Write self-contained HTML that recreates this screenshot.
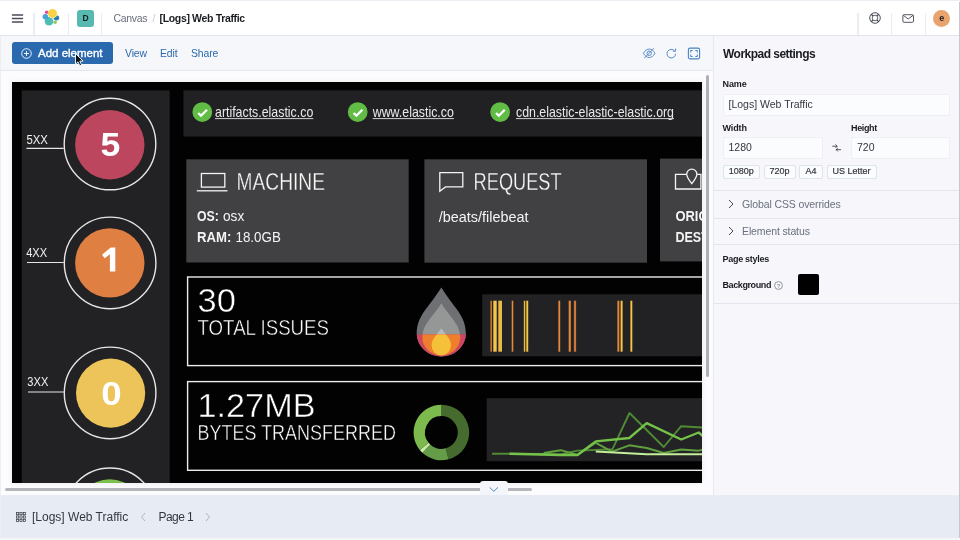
<!DOCTYPE html>
<html><head><meta charset="utf-8">
<style>
*{box-sizing:border-box;margin:0;padding:0}
html,body{width:960px;height:540px;overflow:hidden}
body{font-family:"Liberation Sans",sans-serif;background:#f6f7fb;position:relative;color:#343741}
.abs{position:absolute}
#hdr{left:0;top:0;width:960px;height:36px;background:#fff;border-top:1.5px solid #eceef3;border-bottom:1px solid #e1e4eb;box-shadow:0 1px 2px rgba(60,70,100,0.06)}
.sep{position:absolute;top:12.5px;width:1.3px;height:22.5px;background:#eaecf2}
#tool{left:0;top:36px;width:714px;height:35px;background:#f6f7fb;border-bottom:1px solid #e4e7ee}
#addbtn{left:12px;top:42.3px;width:101px;height:22px;background:#2a69ae;border-radius:3px;color:#fff;font-size:11.5px;line-height:22px}
.tl{position:absolute;top:47.6px;font-size:10.4px;letter-spacing:-0.1px;color:#2a69ae;line-height:12px}
#stage{left:0;top:71px;width:713px;height:424px;background:#fcfcfe}
#canvas{left:11.9px;top:82px;width:690.1px;height:401.4px;background:#020203;overflow:hidden;box-shadow:0 0 5px rgba(40,50,80,0.10)}
#side{left:713px;top:36px;width:247px;height:459px;background:#f6f6fb;border-left:1px solid #e6e8ef}
#foot{left:0;top:495px;width:960px;height:43px;background:#e7ebf4}
.lbl{position:absolute;font-size:9px;letter-spacing:-0.1px;font-weight:bold;color:#1a1c21;line-height:10px}
.inp{position:absolute;height:22px;background:#fbfcfd;border:1px solid #eef0f5;border-radius:2px;font-size:10.5px;line-height:19px;padding-left:5px;color:#343741}
.sbtn{position:absolute;top:165px;height:13.5px;background:#fbfcfd;border:1px solid #dfe3ea;border-radius:2px;font-size:9px;line-height:11.5px;text-align:center;color:#343741;-webkit-text-stroke:0.2px #343741}
.hr{position:absolute;left:714px;width:246px;height:1px;background:#e3e6ee}
.acc{position:absolute;left:742px;font-size:10.5px;letter-spacing:-0.12px;color:#69707d;line-height:12px}
.ct{position:absolute;color:#fff;white-space:nowrap}
#wrap{position:absolute;left:0;top:0;width:960px;height:540px;will-change:transform;opacity:0.999}
</style></head><body><div id="wrap">
<!-- header -->
<div id="hdr" class="abs"></div>
<div class="sep" style="left:33.4px"></div><div class="sep" style="left:68px"></div><div class="sep" style="left:101px"></div>
<div class="sep" style="left:857.4px"></div><div class="sep" style="left:891.2px"></div><div class="sep" style="left:925px"></div>
<svg class="abs" style="left:11px;top:13px" width="13" height="11"><g stroke="#4a4e59" stroke-width="1.6"><path d="M0.9 2h11.2M0.9 5.5h11.2M0.9 9h11.2"/></g></svg>
<!-- elastic logo -->
<svg class="abs" style="left:42px;top:8px" width="18" height="18" viewBox="42 8 18 18">
<circle cx="49" cy="21.2" r="4.3" fill="#4fbdb4"/>
<ellipse cx="45.4" cy="16.8" rx="2.9" ry="2.7" fill="#4aa2da"/>
<ellipse cx="56.4" cy="17.8" rx="2.8" ry="2.6" fill="#2a7db1"/>
<circle cx="52.5" cy="13.4" r="4.9" fill="#fefefc"/>
<circle cx="52.5" cy="13.4" r="4.5" fill="#fad344"/>
<circle cx="46.6" cy="12.3" r="1.7" fill="#e3489a"/>
<circle cx="55.2" cy="22.3" r="1.7" fill="#93c75a"/>
</svg>
<div class="abs" style="left:77px;top:10px;width:17px;height:17px;border-radius:3px;background:#56bab0;color:#1a1c21;font-size:8.5px;font-weight:bold;text-align:center;line-height:17px">D</div>
<div class="abs" style="left:113.6px;top:12px;font-size:10.5px;line-height:12px;color:#69707d;letter-spacing:-0.35px">Canvas</div>
<div class="abs" style="left:152.6px;top:12px;font-size:10.5px;line-height:12px;color:#c5cad3">/</div>
<div class="abs" style="left:159.5px;top:12px;font-size:10.5px;line-height:12px;color:#1a1c21;font-weight:bold;letter-spacing:-0.34px">[Logs] Web Traffic</div>
<!-- header right icons -->
<svg class="abs" style="left:867.7px;top:11.4px" width="14" height="14" viewBox="0 0 14 14"><g fill="none" stroke="#3a3e48"><circle cx="7" cy="7" r="5.3" stroke-width="0.9"/><circle cx="7" cy="7" r="2.8" stroke-width="0.8"/><path d="M3.3 3.3l1.6 1.6M10.7 3.3L9.1 4.9M3.3 10.7l1.6-1.6M10.7 10.7L9.1 9.1" stroke-width="1.3"/></g></svg>
<svg class="abs" style="left:902px;top:14px" width="13" height="10" viewBox="0 0 13 10"><rect x="0.9" y="0.7" width="10.6" height="7.6" rx="1.2" fill="none" stroke="#4a4e58" stroke-width="0.95"/><path d="M1.4 1.4l4.8 3.6L11 1.4" fill="none" stroke="#4a4e58" stroke-width="0.95"/></svg>
<div class="abs" style="left:933.1px;top:9.7px;width:17.2px;height:17.2px;border-radius:50%;background:#e9a36d;color:#1a1c21;font-size:9px;font-weight:bold;text-align:center;line-height:16.5px">e</div>


<!-- toolbar -->
<div id="tool" class="abs"></div>
<div id="addbtn" class="abs"><svg class="abs" style="left:9px;top:5.5px" width="11" height="11" viewBox="0 0 11 11"><circle cx="5.5" cy="5.5" r="4.8" fill="none" stroke="#fff" stroke-width="0.9"/><path d="M5.5 3v5M3 5.5h5" stroke="#fff" stroke-width="0.9"/></svg><span class="abs" style="left:26px;top:0;font-size:11.5px;-webkit-text-stroke:0.35px #fff;white-space:nowrap">Add element</span></div>
<div class="tl" style="left:125px">View</div><div class="tl" style="left:160px">Edit</div><div class="tl" style="left:191px">Share</div>

<!-- toolbar right icons -->
<svg class="abs" style="left:642px;top:46px" width="15" height="14" viewBox="642 46 15 14"><g fill="none" stroke="#5a8dc7" stroke-width="1"><path d="M643.4 53.3C645 50.4 647 49.1 649.2 49.1S653.4 50.4 655 53.3C653.4 56.2 651.4 57.5 649.2 57.5S645 56.2 643.4 53.3Z"/><circle cx="649.2" cy="53.3" r="2.2"/><path d="M644.2 58.1L654.2 48.2" stroke-width="1"/></g></svg>
<svg class="abs" style="left:665px;top:46px" width="13" height="14" viewBox="665 46 13 14"><g fill="none" stroke="#5c8fc8" stroke-width="1"><path d="M674.6 50.9A4.3 4.3 0 1 0 675.6 53.7"/><path d="M675.6 48.5V51.2H672.9"/></g></svg>
<svg class="abs" style="left:687px;top:46px" width="14" height="14" viewBox="687 46 14 14"><g fill="none" stroke="#4a83c2"><rect x="688.4" y="48.1" width="11.2" height="10.8" rx="1.6" stroke-width="1.1"/><path d="M690.7 52.5V50.5H692.7M695.3 50.5H697.3V52.5M697.3 54.5V56.5H695.3M692.7 56.5H690.7V54.5" stroke-width="1"/></g></svg>
<!-- cursor -->
<svg class="abs" style="left:74px;top:52px" width="12" height="15" viewBox="-1.5 -1.5 12 15"><path d="M0 0V10.6L2.5 8.3L4.3 12.3L6.1 11.5L4.3 7.6H7.6Z" fill="#111" stroke="#fff" stroke-width="0.9" stroke-linejoin="round"/></svg>
<div id="stage" class="abs"></div>
<div id="canvas" class="abs">
<svg class="abs" style="left:0;top:0" width="690" height="401" viewBox="12 82 690 401" font-family="Liberation Sans, sans-serif">
<rect x="21.7" y="90.4" width="148" height="400" fill="#222224"/>
<rect x="183.4" y="90.3" width="520" height="46.3" fill="#212123"/>
<circle cx="110" cy="144" r="45.8" fill="none" stroke="#e6e6e6" stroke-width="1.4"/>
<circle cx="109.8" cy="144.8" r="34.7" fill="#bc465d"/>
<text x="100.4" y="155.8" font-size="34" font-weight="bold" fill="#fff" textLength="19.8" lengthAdjust="spacingAndGlyphs">5</text>
<text x="26.4" y="143.6" font-size="12.5" fill="#f0f0f0" textLength="21.5" lengthAdjust="spacingAndGlyphs">5XX</text>
<path d="M26.4 148.4H63.6" stroke="#e6e6e6" stroke-width="1.1"/>

<circle cx="110.1" cy="262.9" r="45.8" fill="none" stroke="#e6e6e6" stroke-width="1.4"/>
<circle cx="109.8" cy="262.9" r="34.7" fill="#e07f42"/>
<path d="M115.3 271.6H109.9V254.2L104.7 258.2L102 254.7L110.8 247.6H115.3Z" fill="#fff"/>
<text x="26.2" y="256.5" font-size="12.5" fill="#f0f0f0" textLength="21" lengthAdjust="spacingAndGlyphs">4XX</text>
<path d="M27 262.5H63.8" stroke="#e6e6e6" stroke-width="1.1"/>

<circle cx="110.1" cy="392.9" r="45.8" fill="none" stroke="#e6e6e6" stroke-width="1.4"/>
<circle cx="110.6" cy="393.1" r="34.6" fill="#edc45a"/>
<text x="101.3" y="404.8" font-size="34" font-weight="bold" fill="#fff" textLength="20.4" lengthAdjust="spacingAndGlyphs">0</text>
<text x="27.3" y="386" font-size="12.5" fill="#f0f0f0" textLength="21" lengthAdjust="spacingAndGlyphs">3XX</text>
<path d="M28 392H63.8" stroke="#e6e6e6" stroke-width="1.1"/>

<circle cx="110.1" cy="513.8" r="45.8" fill="none" stroke="#e6e6e6" stroke-width="1.4"/>
<circle cx="109.8" cy="514" r="34.7" fill="#7cc04b"/>

<text x="26.4" y="507" font-size="12.5" fill="#f0f0f0" textLength="21.5" lengthAdjust="spacingAndGlyphs">2XX</text>
<path d="M26.4 513H63.6" stroke="#e6e6e6" stroke-width="1.1"/>

<circle cx="202.3" cy="112.1" r="9.9" fill="#60bc45"/><path d="M198.2 113L201.0 115.7L207.0 109.8" fill="none" stroke="#fff" stroke-width="2.3" stroke-linejoin="miter"/><text x="215" y="117" font-size="14.5" fill="#e9e9e9" textLength="98.3" lengthAdjust="spacingAndGlyphs">artifacts.elastic.co</text><path d="M215 118.6h98.3" stroke="#d0d0d0" stroke-width="1"/>
<circle cx="357.7" cy="112.1" r="9.9" fill="#60bc45"/><path d="M353.6 113L356.4 115.7L362.4 109.8" fill="none" stroke="#fff" stroke-width="2.3" stroke-linejoin="miter"/><text x="372.7" y="117" font-size="14.5" fill="#e9e9e9" textLength="81.2" lengthAdjust="spacingAndGlyphs">www.elastic.co</text><path d="M372.7 118.6h81.2" stroke="#d0d0d0" stroke-width="1"/>
<circle cx="500.1" cy="112.1" r="9.9" fill="#60bc45"/><path d="M496.0 113L498.8 115.7L504.8 109.8" fill="none" stroke="#fff" stroke-width="2.3" stroke-linejoin="miter"/><text x="516" y="117" font-size="14.5" fill="#e9e9e9" textLength="158" lengthAdjust="spacingAndGlyphs">cdn.elastic-elastic-elastic.org</text><path d="M516 118.6h158" stroke="#d0d0d0" stroke-width="1"/>
<!-- machine -->
<rect x="186.3" y="159.3" width="222.4" height="103.2" fill="#414143"/>
<g fill="none" stroke="#f4f4f4" stroke-width="1.3"><rect x="201.4" y="173.5" width="23.4" height="13.6"/><path d="M196.8 190.8H227.5"/></g>
<text x="236.6" y="190.2" font-size="23" fill="#f8f8f8" stroke="#414143" stroke-width="0.3" textLength="88.4" lengthAdjust="spacingAndGlyphs">MACHINE</text>
<text x="197" y="221.3" font-size="14" fill="#f4f4f4"><tspan font-weight="bold" textLength="21.8" lengthAdjust="spacingAndGlyphs">OS:</tspan></text>
<text x="223" y="221.3" font-size="14" fill="#f4f4f4" textLength="21.3" lengthAdjust="spacingAndGlyphs">osx</text>
<text x="197" y="242.3" font-size="14" fill="#f4f4f4" font-weight="bold" textLength="34.3" lengthAdjust="spacingAndGlyphs">RAM:</text>
<text x="235.5" y="242.3" font-size="14" fill="#f4f4f4" textLength="45.3" lengthAdjust="spacingAndGlyphs">18.0GB</text>
<!-- request -->
<rect x="424.4" y="159.3" width="222.6" height="103.4" fill="#414143"/>
<path d="M439.8 172.6H462.8V186.9H445.5L439.8 191.3Z" fill="none" stroke="#f4f4f4" stroke-width="1.3"/>
<text x="473.6" y="189.5" font-size="23" fill="#f8f8f8" stroke="#414143" stroke-width="0.3" textLength="88" lengthAdjust="spacingAndGlyphs">REQUEST</text>
<text x="438.8" y="221.6" font-size="14" fill="#f4f4f4" textLength="89.6" lengthAdjust="spacingAndGlyphs">/beats/filebeat</text>
<!-- third -->
<rect x="660" y="158.6" width="50" height="102.8" fill="#414143"/>
<g fill="none" stroke="#f4f4f4" stroke-width="1.3"><path d="M686.6 174.3H675.5V189H700.9V174.3H697"/><path d="M691.8 183.6c-3.1-3.9-5.1-6.6-5.1-9.4a5.1 5.1 0 0 1 10.2 0c0 2.8-2 5.5-5.1 9.4z"/></g>
<text x="675.4" y="221.2" font-size="13.8" font-weight="bold" fill="#f4f4f4" textLength="46" lengthAdjust="spacingAndGlyphs">ORIGIN</text>
<text x="675.4" y="242.2" font-size="13.8" font-weight="bold" fill="#f4f4f4" textLength="33.4" lengthAdjust="spacingAndGlyphs">DEST</text>
<!-- total issues -->
<rect x="187.6" y="277" width="530" height="88.6" fill="none" stroke="#ececec" stroke-width="1.4"/>
<text x="197.5" y="312.2" font-size="33.5" fill="#fff" stroke="#020203" stroke-width="0.5" textLength="38.4" lengthAdjust="spacingAndGlyphs">30</text>
<text x="197.5" y="335.4" font-size="21.5" fill="#fff" stroke="#020203" stroke-width="0.45" textLength="131.5" lengthAdjust="spacingAndGlyphs">TOTAL ISSUES</text>
<!-- flame -->
<defs><clipPath id="lv"><rect x="400" y="334.6" width="80" height="30"/></clipPath>
<path id="f1" d="M441.3 287.6C453.3 307.1 465.9 315.6 465.9 333.6A24.6 22.8 0 0 1 416.7 333.6C416.7 315.6 429.3 307.1 441.3 287.6Z"/>
<path id="f2" d="M441.3 303.3C450.5 318 460.2 324.4 460.2 338A18.9 17.3 0 0 1 422.4 338C422.4 324.4 432.1 318 441.3 303.3Z"/>
<path id="f3" d="M441.3 328.2C446 335.5 451 338.7 451 345.5A9.7 9.9 0 0 1 431.6 345.5C431.6 338.7 436.6 335.5 441.3 328.2Z"/></defs>
<use href="#f1" fill="#6f7073"/><use href="#f2" fill="#959696"/><use href="#f3" fill="#b8bbbd"/>
<g clip-path="url(#lv)"><use href="#f1" fill="#d0455f"/><use href="#f2" fill="#ee7f2d"/><use href="#f3" fill="#f5c13b"/></g>
<rect x="482.2" y="294.3" width="230" height="62" fill="#222224"/>
<rect x="490.5" y="300.7" width="1.3" height="51" fill="#e8873a"/><rect x="493.3" y="300.7" width="3.4" height="51" fill="#f5c645"/><rect x="498.3" y="300.7" width="3.7" height="51" fill="#e6ba45"/><rect x="511.7" y="300.7" width="1.6" height="51" fill="#e8873a"/><rect x="523.8" y="300.7" width="1.5" height="51" fill="#e6ba45"/><rect x="526.3" y="300.7" width="1.9" height="51" fill="#f5c645"/><rect x="558.4" y="300.7" width="1.8" height="51" fill="#e8873a"/><rect x="568.7" y="300.7" width="2.1" height="51" fill="#e8873a"/><rect x="573.9" y="300.7" width="2.2" height="51" fill="#cc7739"/><rect x="617.4" y="300.7" width="1.9" height="51" fill="#e8873a"/><rect x="620.6" y="300.7" width="2.0" height="51" fill="#f5c645"/><rect x="630.4" y="300.7" width="1.9" height="51" fill="#f5c645"/>
<!-- bytes -->
<rect x="187.6" y="381.6" width="530" height="88.7" fill="none" stroke="#ececec" stroke-width="1.4"/>
<text x="197.5" y="416.7" font-size="33.5" fill="#fff" stroke="#020203" stroke-width="0.5" textLength="118" lengthAdjust="spacingAndGlyphs">1.27MB</text>
<text x="197.5" y="439.7" font-size="21.5" fill="#fff" stroke="#020203" stroke-width="0.45" textLength="198.5" lengthAdjust="spacingAndGlyphs">BYTES TRANSFERRED</text>
<path d="M441.40 404.70A27.8 27.8 0 0 1 448.60 459.35L445.64 448.34A16.4 16.4 0 0 0 441.40 416.10Z" fill="#456c2e"/><path d="M448.60 459.35A27.8 27.8 0 0 1 422.44 452.83L430.22 444.49A16.4 16.4 0 0 0 445.64 448.34Z" fill="#649c47"/><path d="M422.44 452.83A27.8 27.8 0 0 1 419.80 450.00L428.65 442.82A16.4 16.4 0 0 0 430.22 444.49Z" fill="#c8eca6"/><path d="M419.80 450.00A27.8 27.8 0 0 1 441.40 404.70L441.40 416.10A16.4 16.4 0 0 0 428.65 442.82Z" fill="#7dba4e"/>
<rect x="486.7" y="398.2" width="230" height="63" fill="#232325"/>
<g fill="none" stroke-linejoin="round">
<polyline points="492,453.7 543.7,453.9 560.5,454.4 577.5,450.6 612.5,449.2 629.5,413 663.7,447 681.2,426.2 704,427.6" stroke="#4f8a35" stroke-width="1.9"/>
<polyline points="543.7,453 560.8,450.2 577.5,455 595.8,442.8 612,451.6 629.3,445.3 646.7,448 663.7,453 681.2,449.5 698.7,450.7 704,449" stroke="#5fa03f" stroke-width="1.9"/>
<polyline points="509.5,453.8 560,455 577.5,455 595.8,441.4 629.3,438 646.7,423.2 681.2,439.5 698.7,432.5 704,437" stroke="#74c24a" stroke-width="2.4"/>
<polyline points="595.8,451.4 646.7,454.2 704,454.2" stroke="#c5ee9a" stroke-width="2"/>
</g>
</svg>
</div>
<div id="side" class="abs"></div>
<div class="abs" style="left:723px;top:47px;font-size:12px;font-weight:bold;color:#1a1c21;line-height:14px;letter-spacing:-0.52px">Workpad settings</div>
<div class="lbl" style="left:722.5px;top:79px">Name</div>
<div class="inp" style="left:722.5px;top:93.5px;width:227px">[Logs] Web Traffic</div>
<div class="lbl" style="left:722.5px;top:123px">Width</div>
<div class="lbl" style="left:851px;top:123px;letter-spacing:-0.35px">Height</div>
<div class="inp" style="left:722.5px;top:137px;width:100px">1280</div>
<div class="inp" style="left:851px;top:137px;width:98.5px">720</div>
<svg class="abs" style="left:832px;top:143px" width="10" height="10" viewBox="0 0 10 10"><g fill="none" stroke="#343741" stroke-width="0.85"><path d="M0.3 3.2h4.8M3.5 1.5l1.7 1.7-1.7 1.7"/><path d="M9 6.7h-4.8M5.8 5l-1.7 1.7 1.7 1.7"/></g></svg>
<div class="sbtn" style="left:722.5px;width:37.5px">1080p</div>
<div class="sbtn" style="left:763.5px;width:32px">720p</div>
<div class="sbtn" style="left:799px;width:24px">A4</div>
<div class="sbtn" style="left:826.5px;width:50px">US Letter</div>
<div class="hr" style="top:190px"></div><div class="hr" style="top:218px"></div><div class="hr" style="top:244px"></div><div class="hr" style="top:303px"></div>
<svg class="abs" style="left:727px;top:199px" width="8" height="10" viewBox="0 0 8 10"><path d="M2 1l4 4-4 4" fill="none" stroke="#343741" stroke-width="0.9"/></svg>
<svg class="abs" style="left:727px;top:226px" width="8" height="10" viewBox="0 0 8 10"><path d="M2 1l4 4-4 4" fill="none" stroke="#343741" stroke-width="0.9"/></svg>
<div class="acc" style="top:198px">Global CSS overrides</div>
<div class="acc" style="top:225px">Element status</div>
<div class="lbl" style="left:722.5px;top:254px;letter-spacing:-0.28px">Page styles</div>
<div class="lbl" style="left:722.5px;top:280px;letter-spacing:-0.4px">Background</div>
<svg class="abs" style="left:774px;top:281px" width="9" height="9" viewBox="0 0 9 9"><circle cx="4.5" cy="4.5" r="3.9" fill="none" stroke="#69707d" stroke-width="0.7"/><text x="4.5" y="6.6" font-size="5.5" text-anchor="middle" fill="#69707d" font-family="Liberation Sans">?</text></svg>
<div class="abs" style="left:798px;top:274px;width:21px;height:21px;background:#000;border-radius:2px"></div>
<div id="foot" class="abs"></div>
<div class="abs" style="left:0;top:36px;width:1px;height:504px;background:#eceef3"></div>
<div class="abs" style="left:0;top:538px;width:960px;height:2px;background:#f4f6fa"></div>
<svg class="abs" style="left:16px;top:512px" width="10" height="10" viewBox="0 0 10 10"><g fill="none" stroke="#343741" stroke-width="0.7"><rect x="0.5" y="0.5" width="2.2" height="2.2"/><rect x="3.9" y="0.5" width="2.2" height="2.2"/><rect x="7.3" y="0.5" width="2.2" height="2.2"/><rect x="0.5" y="3.9" width="2.2" height="2.2"/><rect x="3.9" y="3.9" width="2.2" height="2.2"/><rect x="7.3" y="3.9" width="2.2" height="2.2"/><rect x="0.5" y="7.3" width="2.2" height="2.2"/><rect x="3.9" y="7.3" width="2.2" height="2.2"/><rect x="7.3" y="7.3" width="2.2" height="2.2"/></g></svg>
<div class="abs" style="left:32px;top:510px;font-size:12px;line-height:14px;color:#343741">[Logs] Web Traffic</div>
<svg class="abs" style="left:140px;top:512px" width="6" height="10" viewBox="0 0 6 10"><path d="M5 1L1.5 5 5 9" fill="none" stroke="#abb4c4" stroke-width="1"/></svg>
<div class="abs" style="left:158.6px;top:510px;font-size:12px;line-height:14px;color:#343741;letter-spacing:-0.6px">Page 1</div>
<svg class="abs" style="left:205px;top:512px" width="6" height="10" viewBox="0 0 6 10"><path d="M1 1l3.5 4L1 9" fill="none" stroke="#abb4c4" stroke-width="1"/></svg>
<!-- scrollbars -->
<div class="abs" style="left:706.3px;top:75px;width:2.8px;height:302px;background:#adb0b7;border-radius:1.5px"></div>
<div class="abs" style="left:5px;top:488px;width:527px;height:3px;background:#b4b6bc;border-radius:1.5px"></div>
<div class="abs" style="left:479.8px;top:481px;width:28px;height:14px;background:#f5f6fb;border-radius:3px 3px 0 0"></div>
<svg class="abs" style="left:488px;top:486px" width="12" height="7" viewBox="0 0 12 7"><path d="M1.6 1.4l4.2 3.9 4.2-3.9" fill="none" stroke="#4a87c5" stroke-width="1"/></svg>
<div class="abs" style="left:958.6px;top:2px;width:1.4px;height:536px;background:#c6c8ce"></div>
</div></body></html>
